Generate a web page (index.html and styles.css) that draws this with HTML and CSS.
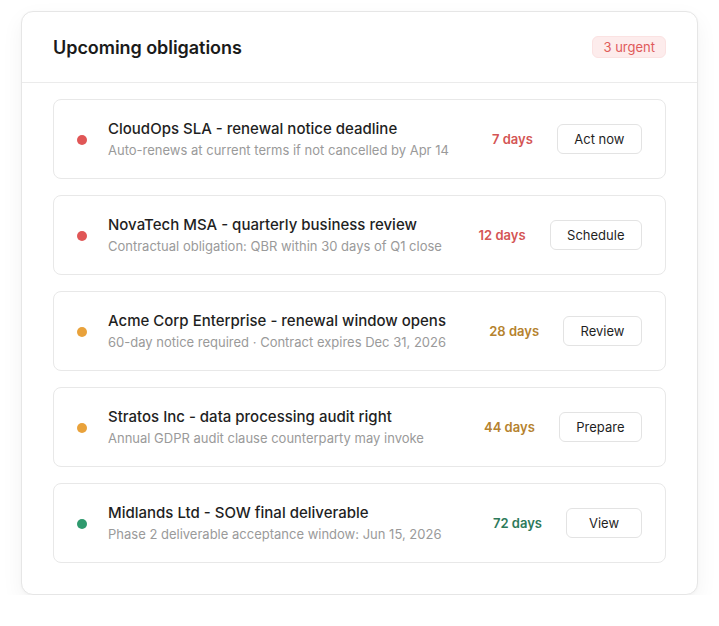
FILE: index.html
```html
<!DOCTYPE html>
<html>
<head>
<meta charset="utf-8">
<link rel="stylesheet" href="styles.css">
</head>
<body>
<div class="card">
  <div class="card-header">
    <h2 class="title">Upcoming obligations</h2>
    <span class="badge">3 urgent</span>
  </div>
  <div class="list">
    <div class="item">
      <span class="dot dot-red"></span>
      <div class="info">
        <div class="item-title">CloudOps SLA - renewal notice deadline</div>
        <div class="item-sub">Auto-renews at current terms if not cancelled by Apr 14</div>
      </div>
      <span class="days days-red">7 days</span>
      <button class="btn">Act now</button>
    </div>
    <div class="item">
      <span class="dot dot-red"></span>
      <div class="info">
        <div class="item-title">NovaTech MSA - quarterly business review</div>
        <div class="item-sub">Contractual obligation: QBR within 30 days of Q1 close</div>
      </div>
      <span class="days days-red">12 days</span>
      <button class="btn">Schedule</button>
    </div>
    <div class="item">
      <span class="dot dot-amber"></span>
      <div class="info">
        <div class="item-title">Acme Corp Enterprise - renewal window opens</div>
        <div class="item-sub">60-day notice required · Contract expires Dec 31, 2026</div>
      </div>
      <span class="days days-amber">28 days</span>
      <button class="btn">Review</button>
    </div>
    <div class="item">
      <span class="dot dot-amber"></span>
      <div class="info">
        <div class="item-title">Stratos Inc - data processing audit right</div>
        <div class="item-sub">Annual GDPR audit clause counterparty may invoke</div>
      </div>
      <span class="days days-amber">44 days</span>
      <button class="btn">Prepare</button>
    </div>
    <div class="item">
      <span class="dot dot-green"></span>
      <div class="info">
        <div class="item-title">Midlands Ltd - SOW final deliverable</div>
        <div class="item-sub">Phase 2 deliverable acceptance window: Jun 15, 2026</div>
      </div>
      <span class="days days-green">72 days</span>
      <button class="btn">View</button>
    </div>
  </div>
</div>
</body>
</html>
```
FILE: styles.css
```css
* { box-sizing: border-box; }
html, body { margin: 0; padding: 0; background: #ffffff; }
body {
  font-family: Inter, "Noto Sans", "Liberation Sans", sans-serif;
  color: #1f1f1f;
  padding: 11px 21px 0 21px;
}
.card {
  width: 677px;
  background: #fff;
  border: 1px solid #e6e6e6;
  border-radius: 12px;
  box-shadow: 0 8px 22px rgba(0,0,0,0.05), 0 1px 3px rgba(0,0,0,0.03);
}
.card-header {
  display: flex;
  align-items: center;
  justify-content: space-between;
  padding: 0 31px;
  height: 71px;
  border-bottom: 1px solid #ebebeb;
}
.title {
  margin: 0;
  font-size: 18px;
  font-weight: 600;
  color: #1a1a1a;
  letter-spacing: -0.05px;
}
.badge {
  background: #fdecec;
  color: #e05a5a;
  border: 1px solid #fbe2e2;
  font-size: 13px;
  font-weight: 400;
  height: 22px;
  line-height: 20px;
  padding: 0 10px;
  border-radius: 6px;
}
.list {
  display: flex;
  flex-direction: column;
  gap: 16px;
  padding: 16px 31px 31px 31px;
}
.item {
  display: flex;
  align-items: center;
  height: 80px;
  padding: 0 23px;
  border: 1px solid #e8e8e8;
  border-radius: 8px;
}
.dot {
  width: 10px;
  height: 10px;
  border-radius: 50%;
  flex: none;
  margin-right: 21px;
  margin-top: 1px;
}
.dot-red { background: #e05656; }
.dot-amber { background: #e9a23b; }
.dot-green { background: #2f9a6e; }
.info {
  flex: 1;
  display: flex;
  flex-direction: column;
  gap: 2px;
  min-width: 0;
}
.item-title {
  font-size: 15px;
  line-height: 20px;
  font-weight: 500;
  color: #1f1f1f;
}
.item-sub {
  font-size: 13px;
  line-height: 18px;
  color: #9a9a9a;
}
.days {
  font-size: 13px;
  font-weight: 600;
  margin-right: 24px;
  white-space: nowrap;
}
.days-red { color: #d45555; }
.days-amber { color: #b5822e; }
.days-green { color: #2d7a5a; }
.btn {
  font-family: inherit;
  font-size: 13px;
  color: #1f1f1f;
  background: #fff;
  border: 1px solid #e3e3e3;
  border-radius: 6px;
  height: 30px;
  min-width: 76px;
  padding: 0 16.5px;
  font-weight: 400;
}
```
